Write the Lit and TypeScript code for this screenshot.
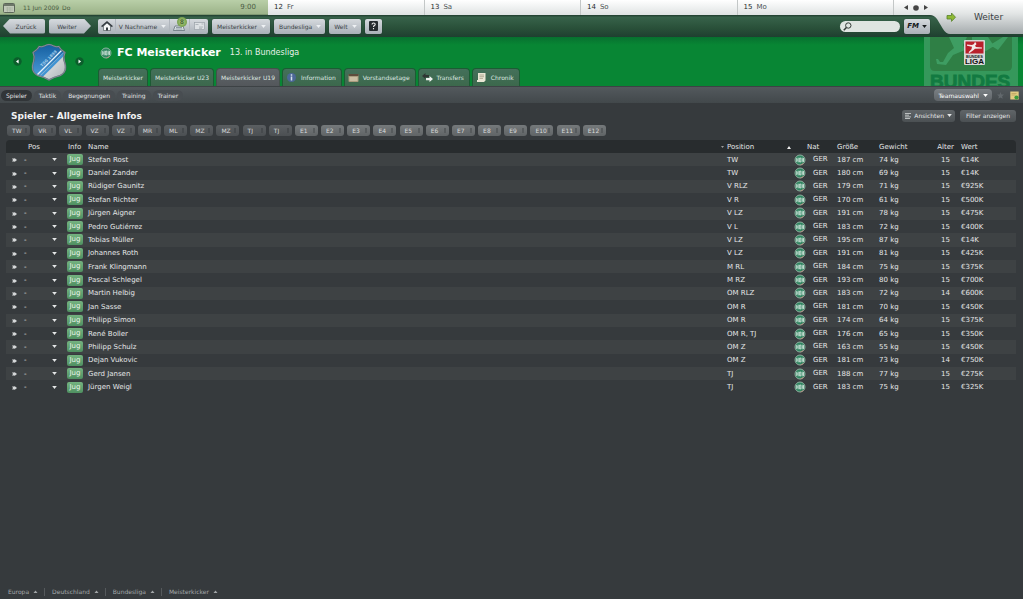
import { LitElement, html, css, svg } from "lit";
import { customElement, property, state } from "lit/decorators.js";
import { classMap } from "lit/directives/class-map.js";

interface Player { name: string; pos: string; height: number; weight: number; age: number; value: string; }

const players: Player[] = ([
  ["Stefan Rost", "TW", 187, 74, 15, "€14K"],
  ["Daniel Zander", "TW", 180, 69, 15, "€14K"],
  ["Rüdiger Gaunitz", "V RLZ", 179, 71, 15, "€925K"],
  ["Stefan Richter", "V R", 170, 61, 15, "€500K"],
  ["Jürgen Aigner", "V LZ", 191, 78, 15, "€475K"],
  ["Pedro Gutiérrez", "V L", 183, 72, 15, "€400K"],
  ["Tobias Müller", "V LZ", 195, 87, 15, "€14K"],
  ["Johannes Roth", "V LZ", 191, 81, 15, "€425K"],
  ["Frank Klingmann", "M RL", 184, 75, 15, "€375K"],
  ["Pascal Schlegel", "M RZ", 193, 80, 15, "€700K"],
  ["Martin Helbig", "OM RLZ", 183, 72, 14, "€600K"],
  ["Jan Sasse", "OM R", 181, 70, 15, "€450K"],
  ["Philipp Simon", "OM R", 174, 64, 15, "€375K"],
  ["René Boller", "OM R, TJ", 176, 65, 15, "€350K"],
  ["Philipp Schulz", "OM Z", 163, 55, 15, "€450K"],
  ["Dejan Vukovic", "OM Z", 181, 73, 14, "€750K"],
  ["Gerd Jansen", "TJ", 188, 77, 15, "€275K"],
  ["Jürgen Weigl", "TJ", 183, 75, 15, "€325K"],
] as [string, string, number, number, number, string][]).map(
  ([name, pos, height, weight, age, value]) => ({ name, pos, height, weight, age, value })
);

const slots = ["TW", "VR", "VL", "VZ", "VZ", "MR", "ML", "MZ", "MZ", "TJ", "TJ",
  "E1", "E2", "E3", "E4", "E5", "E6", "E7", "E8", "E9", "E10", "E11", "E12"];

const reset = css`
  * { box-sizing: border-box; }
  button { font: inherit; color: inherit; border: 0; padding: 0; margin: 0; background: none; cursor: pointer; white-space: nowrap; }
  a { color: inherit; text-decoration: none; white-space: nowrap; }
  svg { display: block; flex: none; }
`;

const down = html`<svg width="5" height="3" viewBox="0 0 5 3" aria-hidden="true"><path d="M.2 0h4.600L2.500 3z" fill="currentColor"/></svg>`;
const up = html`<svg width="5" height="3" viewBox="0 0 5 3" aria-hidden="true"><path d="M.5 3h4L2.500 .4z" fill="currentColor"/></svg>`;

const badge = html`<svg width="12" height="12" viewBox="0 0 12 12" aria-hidden="true">
  <circle cx="6" cy="6" r="5" fill="#2f8460" stroke="#a3bfb0" stroke-width=".8"/>
  <path d="M2.700 4v4M4.200 3.700v4.600M2.700 6h1.500M5.600 4h1.200v4H5.600zM8.200 3.700v4.600M9.500 4v4M8.200 6h1.300" fill="none" stroke="#dcebe3" stroke-width=".8"/>
  <path d="M6.500 11l3-1.600" stroke="#c48a7c" stroke-width=".8"/></svg>`;

@customElement("calendar-bar")
export class CalendarBar extends LitElement {
  static styles = [reset, css`
    :host { display: grid; grid-template-columns: 268px repeat(4, 1fr) 129px; height: 15px; color: #4b5354; font-size: 7px; line-height: 15px; background: linear-gradient(#fff, #dfe3e3); }
    .today { display: flex; align-items: center; gap: 8px; padding: 0 12px 0 3px; font-size: 6px; color: #4a5c43; background: linear-gradient(#b9cfa8, #9db48a 90%, #6f8a66); }
    .time { margin-left: auto; font-size: 7px; }
    .day { display: flex; gap: 4px; padding-left: 6px; border-right: 1px solid #c3c7c7; }
    .num { color: #24292a; }
    .steps { display: flex; align-items: center; gap: 5px; padding-left: 10px; }
    .steps button { display: grid; place-items: center; }
  `];
  render() {
    return html`
      <div class="today">
        <svg width="12" height="10" viewBox="0 0 12 10"><rect x=".5" y=".5" width="11" height="9" rx="1" fill="#c0c8b8" stroke="#5c6759"/><path d="M1 1h10v2H1z" fill="#6d7769"/><path d="M3 5h7M3 7h7M4.500 4v5M7 4v5" stroke="#a3ae9b" stroke-width=".6"/></svg>
        <span>11 Jun 2009&ensp;Do</span><span class="time">9:00</span>
      </div>
      ${[["12", "Fr"], ["13", "Sa"], ["14", "So"], ["15", "Mo"]].map(([n, d]) => html`<div class="day"><span class="num">${n}</span><span>${d}</span></div>`)}
      <div class="steps">
        <button aria-label="Früher"><svg width="4" height="5" viewBox="0 0 4 5"><path d="M4 0v5L0 2.500z" fill="#444"/></svg></button>
        <button aria-label="Heute"><svg width="6" height="6" viewBox="0 0 6 6"><circle cx="3" cy="3" r="2.800" fill="#444"/></svg></button>
        <button aria-label="Später"><svg width="4" height="5" viewBox="0 0 4 5"><path d="M0 0v5l4-2.500z" fill="#444"/></svg></button>
      </div>`;
  }
}

@customElement("main-nav")
export class MainNav extends LitElement {
  static styles = [reset, css`
    :host { display: flex; align-items: center; gap: 4px; height: 22px; padding: 0 93px 0 3px; font-size: 6px; color: #3a4246; background: linear-gradient(#1f3c2e, #37624a 10%, #295039 60%, #1f3f30); }
    .btn { display: flex; align-items: center; justify-content: center; gap: 4px; height: 15px; padding: 0 4px 0 5px; border-radius: 2px; background: linear-gradient(#d6dade, #a9b0b8); box-shadow: 0 0 1px #10241a; }
    .btn svg { color: #eef1f4; }
    .back, .next { width: 42px; }
    .back { padding: 0 0 0 4px; clip-path: polygon(0 50%, 7px 0, 100% 0, 100% 100%, 7px 100%); }
    .next { padding: 0 6px 0 0; clip-path: polygon(0 0, calc(100% - 7px) 0, 100% 50%, calc(100% - 7px) 100%, 0 100%); }
    .group { display: flex; margin: 0 0 0 3px; border-radius: 2px; background: linear-gradient(#d6dade, #a9b0b8); }
    .group .btn { background: none; box-shadow: none; border-radius: 0; border-right: 1px solid #b0b6bd; padding: 0; }
    .group .btn:last-child { border: 0; }
    .w18 { width: 18px; } .w20 { width: 20px; } .w54 { width: 54px; }
    .group .news { position: relative; align-items: flex-end; justify-content: flex-start; padding: 0 0 3px 3px; }
    .count { position: absolute; right: 2px; top: -2px; width: 10px; height: 10px; border-radius: 50%; background: radial-gradient(#b3cf85, #7ea653 60%, #5c8740); color: #24381c; line-height: 10px; text-align: center; }
    .help { width: 17px; padding: 0; }
    .search { display: flex; align-items: center; gap: 2px; margin-left: auto; width: 60px; height: 11px; padding: 0 3px; border-radius: 6px; background: #dfe5e1; }
    .search input { width: 100%; min-width: 0; border: 0; padding: 0; background: none; outline: 0; font: inherit; }
    .fm { width: 26px; padding: 0; gap: 3px; font: italic bold 7px "DejaVu Sans", sans-serif; color: #15191b; }
    .fm svg { color: #15191b; }
  `];
  render() {
    return html`
      <button class="btn back">Zurück</button>
      <button class="btn next">Weiter</button>
      <div class="group">
        <button class="btn w18" aria-label="Startseite"><svg width="12" height="10" viewBox="0 0 12 10"><path d="M2.500 5v4.500h7V5L6 2z" fill="#f5f7f8" stroke="#454d52" stroke-width=".6"/><path d="M.6 5.600L6 1l5.400 4.600" fill="none" stroke="#333a3f" stroke-width="1.400"/><path d="M5 6.500h2v3H5z" fill="#333a3f"/></svg></button>
        <button class="btn w54">V Nachname ${down}</button>
        <button class="btn w20 news" aria-label="Nachrichten"><svg width="12" height="8" viewBox="0 0 12 8"><path d="M.5 7.500L2 3h8l1.500 4.500z" fill="#dfe6ea" stroke="#56636d" stroke-width=".7"/><path d="M3 4.500h6M2.500 6h7" stroke="#6c7983" stroke-width=".7"/></svg><span class="count">8</span></button>
        <button class="btn w18" aria-label="Post"><svg width="11" height="8" viewBox="0 0 11 8"><rect x=".4" y=".4" width="10.200" height="7.200" fill="#dde1e4" stroke="#9aa1a8" stroke-width=".7"/><path d="M1.500 2.500h3M5 5h4M5 6.300h3M7.500 2h2" stroke="#a3a9af" stroke-width=".8"/></svg></button>
      </div>
      <button class="btn">Meisterkicker ${down}</button>
      <button class="btn">Bundesliga ${down}</button>
      <button class="btn">Welt ${down}</button>
      <button class="btn help" aria-label="Hilfe"><svg width="9" height="10" viewBox="0 0 9 10"><rect width="9" height="10" rx="1" fill="#262c30"/><path d="M3 3.600c0-2.200 3.200-2.100 3.200-.2 0 1.200-1.700 1.100-1.700 2.500M4.500 7v1.200" fill="none" stroke="#eee" stroke-width="1.100"/></svg></button>
      <label class="search"><svg width="9" height="9" viewBox="0 0 9 9"><circle cx="5.300" cy="3.500" r="2.700" fill="none" stroke="#333b37" stroke-width="1"/><path d="M3.400 5.500L.8 8.200" stroke="#333b37" stroke-width="1.500"/></svg><input type="search" aria-label="Suche"></label>
      <button class="btn fm">FM ${down}</button>`;
  }
}

@customElement("club-header")
export class ClubHeader extends LitElement {
  static styles = [reset, css`
    :host { display: flex; height: 49px; color: #e6efe8; background: linear-gradient(#07702f, #088634 16%, #088634); }
    .crest { display: flex; align-items: center; justify-content: space-between; width: 98px; padding: 0 14px 0 13px; }
    .main { display: flex; flex-direction: column; justify-content: space-between; flex: 1; }
    .title { display: flex; align-items: center; gap: 5px; padding: 8px 0 0 2px; font-size: 8px; line-height: 16px; }
    h1 { margin: 0 4px 0 0; font-size: 11px; color: #fff; }
    .tabs { display: flex; gap: 2px; font-size: 6px; }
    .tab { display: flex; align-items: center; gap: 4px; height: 18px; padding: 0 4px; border: 1px solid #1c5c34; border-bottom: 0; border-radius: 4px 4px 0 0; color: #dfe8e2; background: linear-gradient(#44705a, #3c684c); }
    .active { background: linear-gradient(#5f6569, #53575b); border-color: #43524a; }
    .icon { padding: 0 5px 0 3px; }
    .league { flex: none; width: 99px; overflow: hidden; }
  `];
  private icons: Record<string, unknown> = {
    Information: svg`<circle cx="5.500" cy="5.500" r="4.500" fill="#4b6796"/><path d="M5.500 2.300v1.500M5.500 4.600v4" stroke="#d5e0ee" stroke-width="1.500"/>`,
    Vorstandsetage: svg`<rect x=".5" y="2" width="10" height="8" rx="1" fill="#a99b7d"/><path d="M.5 2h10v2H.5z" fill="#5d4d3c"/><path d="M1.500 5h8v4h-8z" fill="#c9bea2"/>`,
    Transfers: svg`<path d="M0 4l3.500-3v2H7v2.200H3.500V7z" fill="#2f3734"/><path d="M11 7L7.500 4v2H4v2.200h3.500V10z" fill="#eef2ef"/>`,
    Chronik: svg`<path d="M2 1h7.500v7.500L8 10H1V8h1z" fill="#e9e6d4"/><path d="M3.500 3H8M3.500 4.700H8M3.500 6.400H7" stroke="#a39d84" stroke-width=".8"/>`,
  };
  render() {
    const shield = "M8 3.500q3 .8 5.500-.6Q16 1.500 18 1.500t4.500 1.400q2.500 1.400 5.500.6L29.500 6 34 9.500q-2 4-.5 9 3.500 10-4 14-6.500 1.500-11.500 4.500-5-3-11.500-4.500-7.500-4-4-14 1.500-5-.5-9L6.500 6z";
    return html`
      <div class="crest">
        <button aria-label="Vorheriger Verein"><svg width="9" height="9" viewBox="0 0 9 9"><circle cx="4.500" cy="4.500" r="4.200" fill="#0b5e2b"/><path d="M5.600 2.500v4l-2.600-2z" fill="#fff"/></svg></button>
        <svg width="36" height="38" viewBox="0 0 36 38" role="img" aria-label="TSG 1899 Hoffenheim">
          <defs><linearGradient id="b" x1="0" y1="0" x2="0" y2="1"><stop offset="0" stop-color="#125c9e"/><stop offset="1" stop-color="#55a5df"/></linearGradient>
          <linearGradient id="s" x1="0" y1="0" x2="1" y2="1"><stop offset="0" stop-color="#fff"/><stop offset="1" stop-color="#a9b0b4"/></linearGradient>
          <clipPath id="c"><path d=${shield}/></clipPath></defs>
          <g clip-path="url(#c)"><path d="M0 0h36v38H0z" fill="url(#b)"/><path d="M36 6L6 36l12 2h18z" fill="url(#s)"/><path d="M36 8L8 36" stroke="#3f93d2" stroke-width="2.400"/><path d="M34 4L4 34" stroke="#e6f2fb" stroke-width="1.200"/></g>
          <path d=${shield} fill="none" stroke="#56616a" stroke-width="1.600"/><path d=${shield} fill="none" stroke="#aebbc4" stroke-width=".5"/>
          <text x="11" y="24" transform="rotate(-45 11 24)" font-size="4" font-weight="bold" fill="#a9d2ee">TSG 1899</text>
        </svg>
        <button aria-label="Nächster Verein"><svg width="9" height="9" viewBox="0 0 9 9"><circle cx="4.500" cy="4.500" r="4.200" fill="#0b5e2b"/><path d="M3.500 2.500v4l2.600-2z" fill="#fff"/></svg></button>
      </div>
      <div class="main">
        <div class="title">${badge}<h1>FC Meisterkicker</h1><span>13. in Bundesliga</span></div>
        <nav class="tabs" aria-label="Verein">
          ${["Meisterkicker", "Meisterkicker U23", "Meisterkicker U19", "Information", "Vorstandsetage", "Transfers", "Chronik"].map((t) => html`
            <a href="#" class=${classMap({ tab: true, active: t.endsWith("U19"), icon: t in this.icons })}>
              ${t in this.icons ? html`<svg width="11" height="11" viewBox="0 0 11 11">${this.icons[t]}</svg>` : ""}${t}</a>`)}
        </nav>
      </div>
      <svg class="league" width="99" height="49" viewBox="0 0 99 49" role="img" aria-label="Bundesliga">
        <rect width="94" height="49" fill="#35985b"/>
        <path d="M6 0h82v29q0 5-5 5H11q-5 0-5-5z" fill="#2f7f45"/>
        <path d="M25 0h18l-4 8 2 5-12 5-7 10-9-1-1-5 2 0 2 3 3 0 5-9 6-5zM48 0h16l6 9-8 5-14-2zM66 8l13-8h5l-10 13z" fill="#3e9d62"/>
        <text x="6" y="51" font-family="Liberation Sans, Arial, sans-serif" font-size="19" font-weight="bold" fill="#127a41" stroke="#127a41" stroke-width=".8">BUNDES</text>
        <rect x="40" y="3" width="21" height="25" rx="1" fill="#d8d8d8"/>
        <rect x="41.500" y="4.500" width="18" height="12" fill="#b9202c"/>
        <path d="M43 7.500l5 .5 2-1 .5-1.500h1.500l.3 2-1.300 1.200 1 1.300 6 .5v1l-7 .3-2 1.700-3.500 2.500-1-.7 3-3 .5-2.500-5-1z" fill="#f3e9e9"/>
        <text x="50.500" y="20.500" text-anchor="middle" font-family="Liberation Sans, sans-serif" font-size="4" font-weight="bold" fill="#222">BUNDES</text>
        <text x="50.500" y="26.500" text-anchor="middle" font-family="Liberation Sans, sans-serif" font-size="8" font-weight="bold" fill="#111">LIGA</text>
      </svg>`;
  }
}

@customElement("section-nav")
export class SectionNav extends LitElement {
  static styles = [reset, css`
    :host { display: flex; align-items: center; gap: 2px; height: 17px; padding: 0 4px 0 1px; font-size: 6px; color: #e2e4e5; border-top: 1px solid #3d4245; background: linear-gradient(#53595d, #42484b); }
    .link { height: 11px; line-height: 11px; padding: 0 5px; border-radius: 6px; background: #484d51; }
    .active { background: #313538; }
    .team { display: flex; align-items: center; gap: 4px; height: 12px; margin-left: auto; padding: 0 4px; border-radius: 4px; color: #fff; background: linear-gradient(#7a8084, #606569); }
    .star { margin: 0 4px 0 3px; }
  `];
  render() {
    return html`
      ${["Spieler", "Taktik", "Begegnungen", "Training", "Trainer"].map((t, i) => html`<a href="#" class=${classMap({ link: true, active: i === 0 })}>${t}</a>`)}
      <button class="team">Teamauswahl ${down}</button>
      <button class="star" aria-label="Favorit"><svg width="7" height="7" viewBox="0 0 7 7"><path d="M3.500 0l1 2.400 2.500.2-1.900 1.700.6 2.500-2.200-1.400-2.200 1.400.6-2.500L0 2.600l2.500-.2z" fill="#62686c"/></svg></button>
      <button aria-label="Notiz"><svg width="9" height="9" viewBox="0 0 9 9"><path d="M.3.5h8.400v8H.3z" fill="#e2cb82"/><path d="M1.500 2.500h5M1.500 4h4" stroke="#b79e5c" stroke-width=".7"/><circle cx="6.500" cy="6.500" r="2.100" fill="#3b9a3c"/></svg></button>`;
  }
}

@customElement("squad-table")
export class SquadTable extends LitElement {
  @property({ attribute: false }) rows: Player[] = [];
  static styles = [reset, css`
    :host { display: block; margin: 0 7px 0 6px; font-size: 7px; line-height: 9px; color: #e4e6e7; }
    table { width: 100%; height: 254px; table-layout: fixed; border-collapse: separate; border-spacing: 0; }
    th, td { padding: 1px 0 0; text-align: left; font-weight: 400; white-space: nowrap; }
    th { height: 13px; background: #282c2e; }
    th:first-child { border-radius: 4px 0 0 0; }
    th:last-child { border-radius: 0 4px 0 0; }
    tbody tr:nth-child(odd) { background: #3e4244; }
    .grip { width: 16px; } .pos { width: 26px; } .pick { width: 17px; } .info { width: 21px; }
    .position { width: 74px; } .nat { width: 42px; } .size { width: 42px; } .weight { width: 53px; } .age { width: 25px; } .value { width: 61px; }
    td svg { margin: auto; }
    .griphandle { padding-left: 2px; }
    .poshead { padding-left: 6px; }
    .dash { padding-left: 2px; }
    .infohead { padding-left: 3px; }
    .name, .indent { padding-left: 2px; }
    .shift { padding-left: 8px; }
    .sort { display: flex; align-items: center; gap: 3px; padding: 0 2px; }
    .sort svg:last-child { margin-left: auto; }
    td.pick { padding: 0; }
    .pick button { display: grid; width: 13px; }
    td.tag { padding: 0; }
    .jug { display: block; width: 16px; height: 11px; margin: 0 0 0 2px; border-radius: 2px; text-align: center; line-height: 11px; color: #e9f5ea; background: linear-gradient(#74b380, #4f9061); }
    td.club { padding: 0; }
    .flag { display: flex; align-items: center; gap: 7px; }
    .flag svg { margin: 0 0 0 1px; }
    .nathead { padding-left: 14px; }
    .right { text-align: right; padding-right: 1px; }
    td.right { padding-right: 5px; }
    .money { padding-left: 6px; }
  `];
  render() {
    return html`<table>
      <colgroup><col class="grip"><col class="pos"><col class="pick"><col class="info"><col><col class="position"><col class="nat"><col class="size"><col class="weight"><col class="age"><col class="value"></colgroup>
      <thead><tr>
        <th></th><th class="poshead" colspan="2">Pos</th><th class="infohead">Info</th><th class="name">Name</th>
        <th><span class="sort"><svg width="3" height="2" viewBox="0 0 3 2"><path d="M0 0h3L1.500 2z" fill="#999"/></svg>Position<svg width="4" height="3" viewBox="0 0 4 3"><path d="M0 3h4L2 0z" fill="#eee"/></svg></span></th>
        <th class="nathead">Nat</th><th class="indent">Größe</th><th class="indent">Gewicht</th><th class="right">Alter</th><th class="money">Wert</th>
      </tr></thead>
      <tbody>${this.rows.map((p) => html`<tr>
        <td><svg width="5" height="4" viewBox="0 0 5 4"><path d="M0 .4h2.500V0L5 2 2.500 4v-.4H0L1 2z" fill="#d6d8d9"/></svg></td>
        <td class="dash">-</td>
        <td class="pick"><button aria-label="Position wählen">${down}</button></td>
        <td class="tag"><span class="jug">Jug</span></td>
        <td class="name">${p.name}</td>
        <td class="shift">${p.pos}</td>
        <td class="club"><span class="flag">${badge}<span>GER</span></span></td>
        <td class="indent">${p.height} cm</td><td class="indent">${p.weight} kg</td>
        <td class="right">${p.age}</td><td class="money">${p.value}</td>
      </tr>`)}</tbody></table>`;
  }
}

@customElement("app-root")
export class AppRoot extends LitElement {
  @state() private players = players;
  static styles = [reset, css`
    :host { position: relative; display: flex; flex-direction: column; min-height: 100vh; background: #363a3d; color: #e4e6e7; font-family: "DejaVu Sans", sans-serif; font-size: 6px; }
    .continue { position: absolute; top: 0; right: 0; width: 95px; height: 34px; font-size: 9px; color: #3b4144; }
    .continue svg { position: absolute; inset: 0; }
    .continue span { position: relative; padding-left: 26px; }
    .head { display: flex; align-items: center; gap: 5px; padding: 4px 7px 0 11px; height: 21px; }
    h2 { margin: 0 auto 0 0; font-size: 9px; line-height: 14px; color: #f0f1f2; }
    .tool { display: flex; align-items: center; gap: 3px; height: 12px; padding: 0 3px; border-radius: 3px; background: linear-gradient(#606568, #4b5053); }
    .plain { padding: 0 6px; }
    .slots { display: flex; justify-content: space-between; max-width: 599px; margin: 0 0 4px 7px; padding-top: 1px; }
    .slot { display: flex; align-items: center; justify-content: space-between; width: 23px; height: 11px; padding: 0 3px 0 5px; border-radius: 3px; color: #d8dadb; background: linear-gradient(#5b5f62, #4b4f52); }
    .sub { background: linear-gradient(#75797b, #606466); }
    .slot i { width: 2px; height: 5px; background: #464a4d; }
    .sub i { background: #575b5d; }
    footer { display: flex; align-items: center; gap: 7px; margin-top: auto; height: 15px; padding-left: 8px; color: #a3a7a9; }
    footer button { display: flex; align-items: center; gap: 4px; height: 8px; padding-right: 6px; border-right: 1px solid #55595c; }
    footer button:last-child { border: 0; }
  `];
  render() {
    return html`
      <calendar-bar></calendar-bar>
      <main-nav></main-nav>
      <button class="continue"><svg width="95" height="34" viewBox="0 0 95 34"><defs><linearGradient id="g" x1="0" y1="0" x2="0" y2="1"><stop offset="0" stop-color="#fff"/><stop offset=".4" stop-color="#e2e5e5"/><stop offset="1" stop-color="#a5abad"/></linearGradient></defs><path d="M0 0h95v34H22q-4 0-7-5L9 19q-3-4-7-4H0z" fill="url(#g)"/><path d="M19 15.500h4.500V13l4 4.200-4 4.200V19H19z" fill="#8fb935" stroke="#55812a" stroke-width=".8"/></svg><span>Weiter</span></button>
      <club-header></club-header>
      <section-nav></section-nav>
      <div class="head">
        <h2>Spieler - Allgemeine Infos</h2>
        <button class="tool"><svg width="6" height="6" viewBox="0 0 6 6"><path d="M0 .5h6M0 2.200h4M0 3.900h6M0 5.500h5" stroke="#c6c9cb" stroke-width=".9"/></svg>Ansichten ${down}</button>
        <button class="tool plain">Filter anzeigen</button>
      </div>
      <div class="slots">${slots.map((s) => html`<button class=${classMap({ slot: true, sub: /^E\d/.test(s) })}>${s}<i></i></button>`)}</div>
      <squad-table .rows=${this.players}></squad-table>
      <footer>${["Europa", "Deutschland", "Bundesliga", "Meisterkicker"].map((t) => html`<button>${t} ${up}</button>`)}</footer>`;
  }
}
